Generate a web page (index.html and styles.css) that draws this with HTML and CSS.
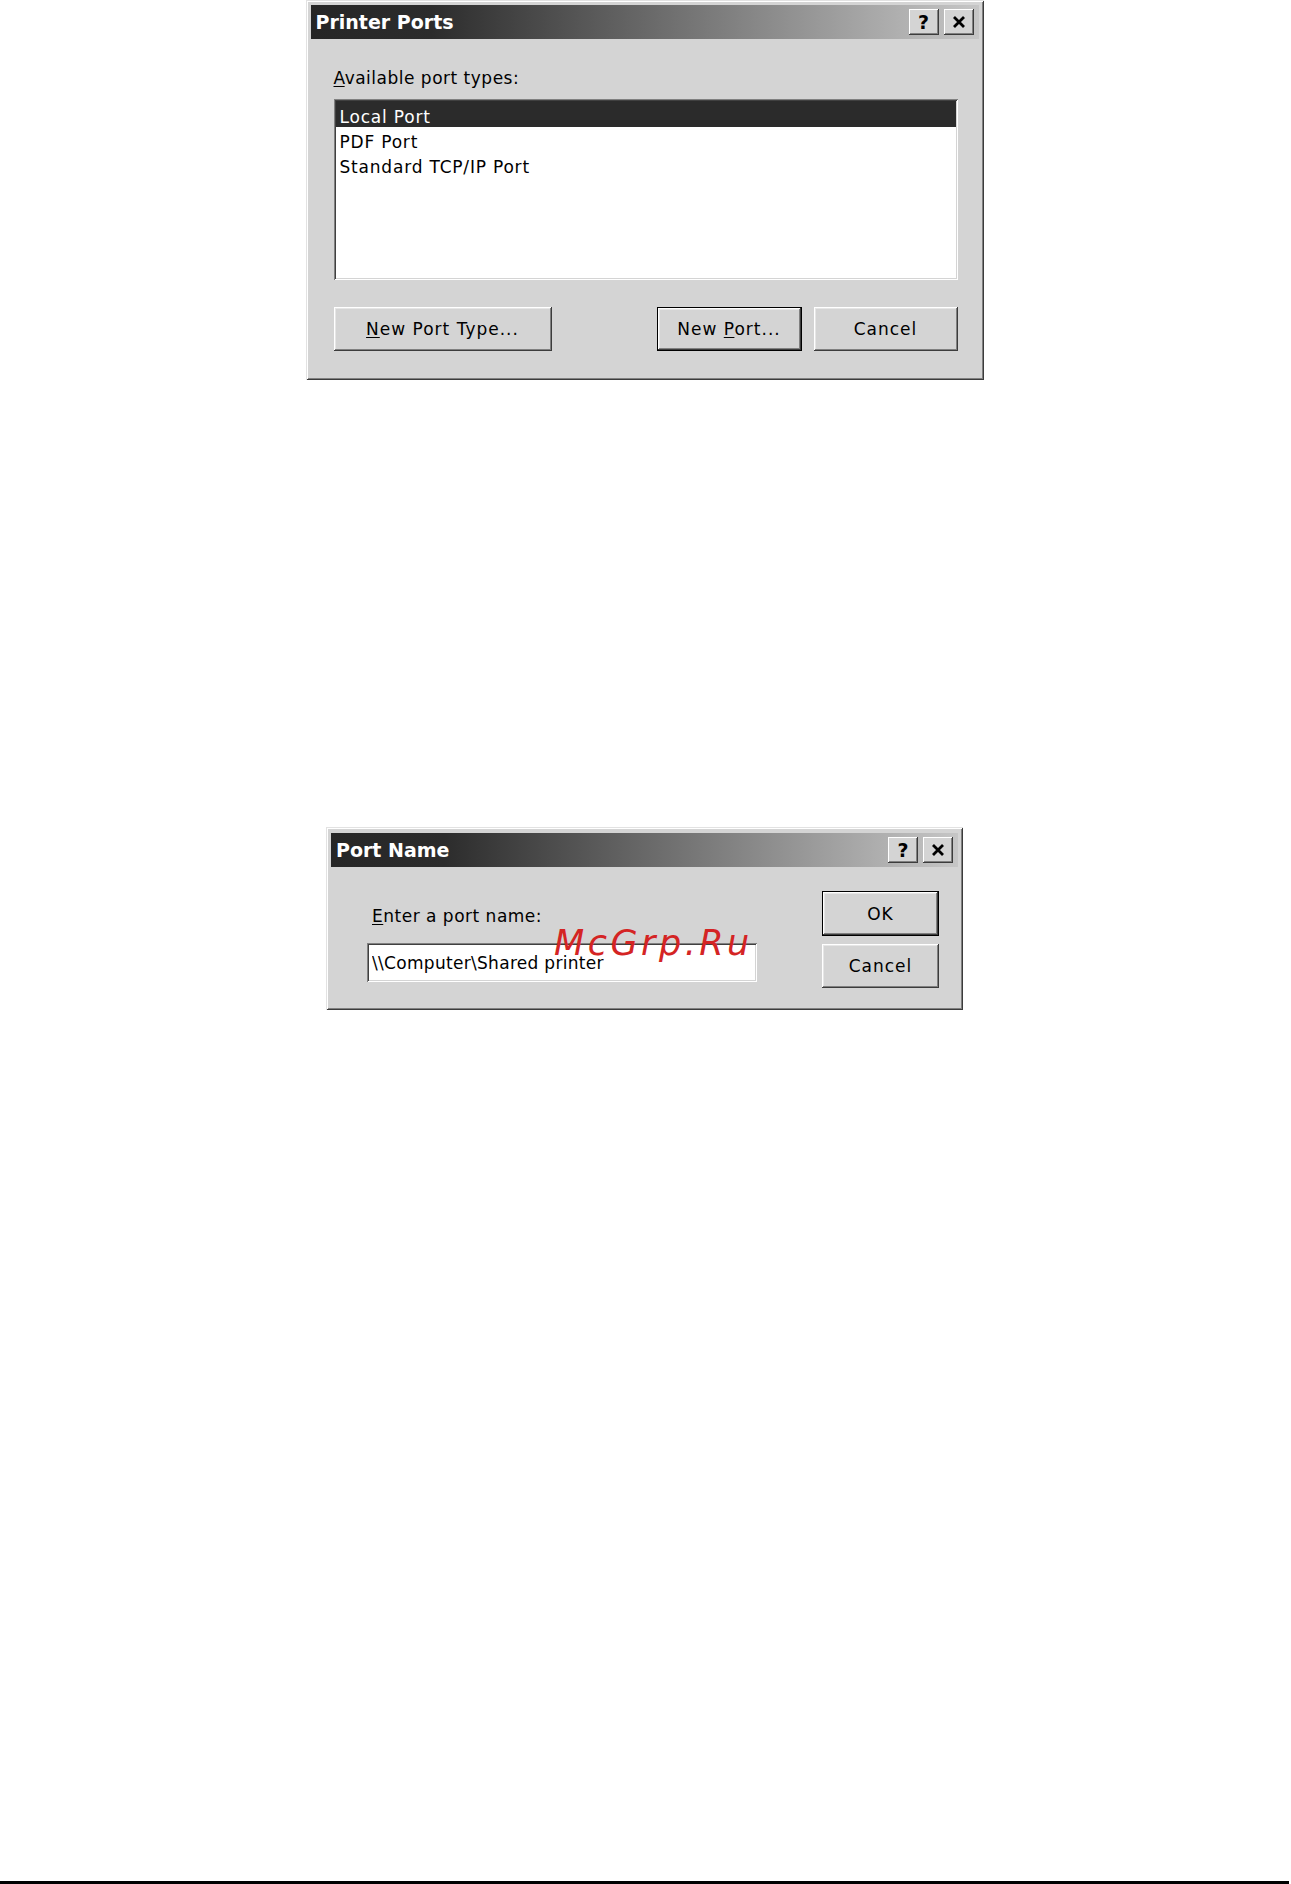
FILE: index.html
```html
<!DOCTYPE html>
<html lang="en">
<head>
  <meta charset="UTF-8" />
  <meta name="viewport" content="width=device-width, initial-scale=1.0"/>
  <title>Printer Ports</title>
  <link rel="stylesheet" href="styles.css">
</head>
<body>
  <div class="page">

    <!-- Printer Ports dialog -->
    <div class="dialog ports">
      <div class="titlebar">
        <span class="title">Printer Ports</span>
        <div class="title-buttons">
          <button class="tbtn help">?</button>
          <button class="tbtn">
            <svg width="14" height="12" viewBox="0 0 14 12"><path d="M2 1 L12 11 M12 1 L2 11" stroke="#000" stroke-width="2.8" fill="none"/></svg>
          </button>
        </div>
      </div>
      <div class="ports-body">
        <label class="caption"><u>A</u>vailable port types:</label>
        <ul class="listbox">
          <li class="selected">Local Port</li>
          <li>PDF Port</li>
          <li>Standard TCP/IP Port</li>
        </ul>
        <div class="actions">
          <button class="btn type-btn"><u>N</u>ew Port Type...</button>
          <div class="group">
            <button class="btn default port-btn">New <u>P</u>ort...</button>
            <button class="btn cancel-btn">Cancel</button>
          </div>
        </div>
      </div>
    </div>

    <!-- Port Name dialog -->
    <div class="dialog portname">
      <div class="titlebar">
        <span class="title">Port Name</span>
        <div class="title-buttons">
          <button class="tbtn help">?</button>
          <button class="tbtn">
            <svg width="14" height="12" viewBox="0 0 14 12"><path d="M2 1 L12 11 M12 1 L2 11" stroke="#000" stroke-width="2.8" fill="none"/></svg>
          </button>
        </div>
      </div>
      <div class="portname-body">
        <div class="field">
          <label class="caption indent" for="portname"><u>E</u>nter a port name:</label>
          <input type="text" id="portname" class="textbox" value="\\Computer\Shared printer" />
        </div>
        <div class="side">
          <button class="btn default side-btn">OK</button>
          <button class="btn side-btn cancel2">Cancel</button>
        </div>
      </div>
      <span class="stamp">McGrp.Ru</span>
    </div>

    <div class="rule"></div>
  </div>
</body>
</html>
```

FILE: styles.css
```css
body {
  margin: 0;
  background: #fff;
  font-family: "DejaVu Sans", Verdana, sans-serif;
  font-size: 17px;
  color: #000;
}

.page {
  display: flex;
  flex-direction: column;
  align-items: center;
  min-height: 1884px;
  padding-right: 2px;
}

/* window frame, raised bevel */
.dialog {
  position: relative;
  box-sizing: border-box;
  background: #d4d4d4;
  padding: 5px;
  box-shadow:
    inset 1px 1px 0 #e2e2e2,
    inset -1px -1px 0 #3c3c3c,
    inset 2px 2px 0 #fff,
    inset -2px -2px 0 #808080;
}

.titlebar {
  display: flex;
  align-items: center;
  justify-content: space-between;
  height: 34px;
  padding: 0 5px;
  background: linear-gradient(90deg, #262626 0%, #2c2c2c 18%, #c6c6c6 100%);
}

.title {
  color: #fff;
  font-weight: bold;
  font-size: 19px;
}

.title-buttons {
  display: flex;
  gap: 5px;
}

.tbtn {
  width: 30px;
  height: 26px;
  padding: 0;
  border: none;
  background: #d4d4d4;
  display: flex;
  align-items: center;
  justify-content: center;
  font-family: "DejaVu Sans", sans-serif;
  font-weight: bold;
  font-size: 19px;
  color: #000;
  box-shadow:
    inset -1px -1px 0 #3c3c3c,
    inset 1px 1px 0 #fff,
    inset -2px -2px 0 #808080;
}

.caption {
  display: block;
  line-height: 20px;
  letter-spacing: 0.5px;
}

.caption.indent {
  padding-left: 5px;
}

u {
  text-decoration-thickness: 1px;
  text-underline-offset: 2px;
}

/* push buttons */
.btn {
  box-sizing: border-box;
  height: 44px;
  padding: 0;
  border: none;
  background: #d4d4d4;
  font-family: "DejaVu Sans", Verdana, sans-serif;
  font-size: 17px;
  letter-spacing: 1px;
  color: #000;
  box-shadow:
    inset -1px -1px 0 #3c3c3c,
    inset 1px 1px 0 #fff,
    inset -2px -2px 0 #808080,
    inset 2px 2px 0 #e6e6e6;
}

.btn.default {
  border: 1px solid #000;
}

/* sunken fields */
.listbox,
.textbox {
  box-sizing: border-box;
  background: #fff;
  box-shadow:
    inset 1px 1px 0 #808080,
    inset -1px -1px 0 #fff,
    inset 2px 2px 0 #404040,
    inset -2px -2px 0 #d4d4d4;
}

/* Printer Ports */
.ports {
  width: 678px;
  height: 380px;
}

.ports-body {
  padding: 29px 21px 0 23px;
}

.listbox {
  list-style: none;
  margin: 11px 0 0;
  padding: 3px 2px 2px;
  height: 181px;
}

.listbox li {
  height: 25px;
  line-height: 30px;
  padding-left: 4px;
  letter-spacing: 0.8px;
}

.listbox li.selected {
  height: 26px;
  line-height: 32px;
  margin-top: -1px;
  background: #2b2b2b;
  color: #fff;
}

.actions {
  display: flex;
  justify-content: space-between;
  margin-top: 27px;
}

.group {
  display: flex;
  gap: 12px;
}

.type-btn { width: 218px; }
.port-btn { width: 145px; }
.cancel-btn { width: 144px; }

/* Port Name */
.portname {
  width: 637px;
  height: 183px;
  margin-top: 447px;
  padding-top: 6px;
}

.portname-body {
  display: flex;
  justify-content: space-between;
  padding: 24px 19px 0 36px;
}

.field {
  padding-top: 15px;
  width: 390px;
}

.textbox {
  display: block;
  width: 390px;
  height: 39px;
  margin-top: 17px;
  padding: 0 5px;
  border: none;
  outline: none;
  font-family: "DejaVu Sans", Verdana, sans-serif;
  font-size: 17px;
  letter-spacing: 0.3px;
  color: #000;
}

.side {
  display: flex;
  flex-direction: column;
  gap: 8px;
}

.side-btn {
  width: 117px;
  height: 45px;
}

.cancel2 {
  height: 44px;
}

/* red site stamp over the dialog */
.stamp {
  position: absolute;
  left: 228px;
  top: 99px;
  font-family: "DejaVu Sans", sans-serif;
  font-style: italic;
  font-size: 35px;
  line-height: 1;
  letter-spacing: 3.5px;
  color: #d42424;
}

.rule {
  margin-top: auto;
  align-self: stretch;
  height: 3px;
  background: #000;
}
```
